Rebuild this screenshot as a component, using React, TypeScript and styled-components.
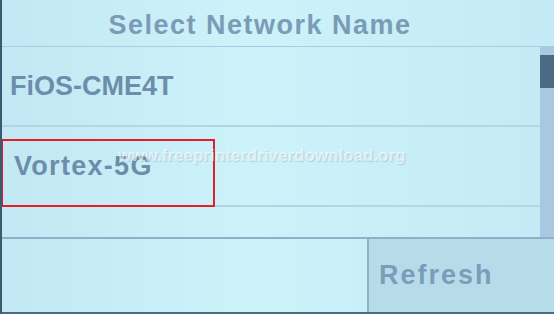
import React from "react";
import styled, { createGlobalStyle } from "styled-components";

const GlobalStyle = createGlobalStyle`
  html, body {
    margin: 0;
    padding: 0;
    background: #c6ebf5;
  }
  body {
    font-family: "Liberation Sans", Arial, sans-serif;
  }
`;

const networks = ["FiOS-CME4T", "Vortex-5G", ""];

export default function App() {
  return (
    <>
      <GlobalStyle />
      <Screen>
        <Header>Select Network Name</Header>
        <ListArea>
          <List>
            {networks.map((name, index) => (
              <Row key={index} $short={index === networks.length - 1} $indent={index === 1 ? 12 : 8}>
                {name}
                {index === 1 && <Highlight />}
              </Row>
            ))}
            <Watermark>www.freeprinterdriverdownload.org</Watermark>
          </List>
          <ScrollTrack>
            <ScrollThumb />
          </ScrollTrack>
        </ListArea>
        <Footer>
          <FooterBlank />
          <FooterButton>Refresh</FooterButton>
        </Footer>
      </Screen>
    </>
  );
}

const Screen = styled("div")`
  width: 554px;
  height: 314px;
  display: flex;
  flex-direction: column;
  background: linear-gradient(90deg, #c2e8f3 0%, #ccf2fa 45%, #c4eaf5 100%);
  border-left: 2px solid #3a5a70;
  border-bottom: 2px solid #4a6a80;
  box-sizing: border-box;
  overflow: hidden;
`;

const Header = styled("div")`
  height: 47px;
  flex: none;
  display: flex;
  align-items: center;
  justify-content: center;
  padding-top: 5px;
  padding-right: 36px;
  font-size: 27px;
  font-weight: bold;
  letter-spacing: 1.5px;
  color: #7b9bb6;
  border-bottom: 1px solid #a8cde0;
  box-sizing: border-box;
`;

const ListArea = styled("div")`
  height: 190px;
  flex: none;
  display: flex;
  border-bottom: 2px solid #8fb0c8;
`;

const List = styled("div")`
  flex: 1;
  position: relative;
  display: flex;
  flex-direction: column;
`;

const Row = styled("div")<{ $short: boolean; $indent: number }>`
  height: ${(p) => (p.$short ? "28px" : "80px")};
  flex: none;
  position: relative;
  display: flex;
  align-items: center;
  padding-left: ${(p) => p.$indent}px;
  font-size: 27px;
  font-weight: bold;
  letter-spacing: ${(p) => (p.$indent > 8 ? "1.3px" : "0px")};
  color: #6d8eab;
  border-bottom: ${(p) => (p.$short ? "none" : "2px solid #b3d6e6")};
  box-sizing: border-box;
`;

const Highlight = styled("div")`
  position: absolute;
  left: -1px;
  top: 12px;
  width: 214px;
  height: 68px;
  border: 2px solid #e41e26;
  box-sizing: border-box;
`;

const Watermark = styled("div")`
  position: absolute;
  left: 116px;
  top: 99px;
  font-size: 17px;
  font-weight: bold;
  color: rgba(255, 255, 255, 0.6);
  text-shadow: 1px 1px 1px rgba(90, 120, 140, 0.25);
`;

const ScrollTrack = styled("div")`
  width: 14px;
  flex: none;
  background: #a9c8e2;
  padding-top: 8px;
  box-sizing: border-box;
`;

const ScrollThumb = styled("div")`
  height: 33px;
  background: #4a6a86;
`;

const Footer = styled("div")`
  flex: 1;
  display: flex;
`;

const FooterBlank = styled("div")`
  width: 365px;
  flex: none;
  border-right: 2px solid #90b2c8;
`;

const FooterButton = styled("div")`
  flex: 1;
  display: flex;
  align-items: center;
  padding-left: 10px;
  font-size: 27px;
  font-weight: bold;
  letter-spacing: 2px;
  color: #7c9db9;
  background: #b6dcea;
`;
